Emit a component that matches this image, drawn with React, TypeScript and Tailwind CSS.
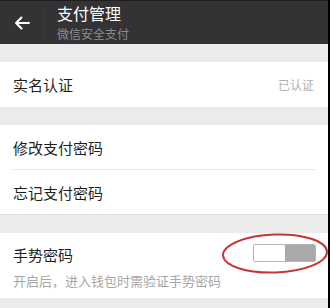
import React from 'react';

const FONT = { fontFamily: '"Noto Sans CJK SC", "Noto Sans", sans-serif' };

function Row({ label, right }: { label: string; right?: string }) {
  return (
    <div className="flex items-center justify-between px-[13px] h-[44px]">
      <span className="text-[15px] text-[#1f1f1f] leading-none">{label}</span>
      {right && <span className="text-[12px] text-[#b0b0b0] leading-none mr-[1px]">{right}</span>}
    </div>
  );
}

export default function App() {
  return (
    <div className="w-[330px] h-[308px] flex bg-black overflow-hidden" style={FONT}>
      <div className="w-[328px] h-full bg-[#ebebeb] flex flex-col">
        {/* Header */}
        <div className="h-[44px] bg-[#333336] border-t border-[#1e1e20] flex items-center shrink-0">
          <div className="w-[43px] flex justify-center">
            <svg width="16" height="14" viewBox="0 0 16 14" fill="none">
              <path d="M15 7H2M7.5 1.5L2 7l5.5 5.5" stroke="#fff" strokeWidth="2" strokeLinecap="round" strokeLinejoin="round" />
            </svg>
          </div>
          <div className="w-px h-[30px] bg-[#3c3c3f]" />
          <div className="ml-[13px] flex flex-col -mt-[1px]">
            <span className="text-[16px] text-white leading-[23px]">支付管理</span>
            <span className="text-[12px] text-[#8c8c8e] leading-[17px]">微信安全支付</span>
          </div>
        </div>

        <div className="h-[18px] shrink-0" />
        <div className="bg-white h-[45px] flex flex-col justify-center">
          <Row label="实名认证" right="已认证" />
        </div>

        <div className="h-[18px] shrink-0" />
        <div className="bg-white flex flex-col border-b border-[#e0e0e0]">
          <Row label="修改支付密码" />
          <div className="h-px bg-[#e6e6e6] ml-[13px] mr-[12px]" />
          <Row label="忘记支付密码" />
        </div>

        <div className="h-[18px] shrink-0" />
        <div className="bg-white h-[65px] relative flex flex-col px-[13px]">
          <span className="text-[15px] text-[#1f1f1f] leading-none mt-[14px]">手势密码</span>
          <span className="text-[13px] text-[#a6a6a6] leading-none mt-[12px]">开启后，进入钱包时需验证手势密码</span>
          <div className="absolute left-[253px] top-[11px] w-[63px] h-[18px] border border-[#b4b4b4] rounded-[2px] flex overflow-hidden">
            <div className="w-[31px] bg-white" />
            <div className="flex-1 bg-[#a9a9a9]" />
          </div>
          <svg className="absolute left-[220px] top-[0px]" width="110" height="42" viewBox="0 0 110 42">
            <ellipse cx="55" cy="20.5" rx="52" ry="19" fill="none" stroke="#c83434" strokeWidth="2" transform="rotate(-2 55 20.5)" />
          </svg>
        </div>
      </div>
    </div>
  );
}
